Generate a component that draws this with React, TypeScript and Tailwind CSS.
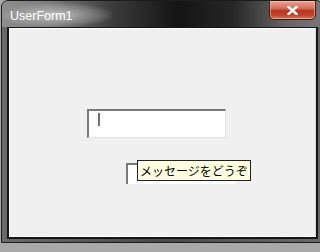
import React from "react";

export default function App() {
  return (
    <div className="w-[320px] h-[252px] bg-[#a9a9a9] overflow-hidden pl-[1px]">
      <div className="w-[322px] shrink-0 h-[243px] rounded-t-[7px] border border-[#1c1c1c] bg-[#6f6f6f] flex flex-col overflow-hidden">
        {/* Title bar */}
        <div className="relative h-[26px] shrink-0 flex items-center pl-[8px] bg-[linear-gradient(90deg,#8e8e8e_0%,#7c7c7c_15%,#3a3a3a_35%,#141414_55%,#262626_72%,#636363_88%,#777777_100%)]">
          <div className="absolute left-0 top-[2px] w-[110px] h-[24px] rounded-full bg-[radial-gradient(ellipse_at_center,rgba(235,235,235,0.6)_0%,rgba(200,200,200,0.25)_55%,rgba(0,0,0,0)_75%)]" />
          <span className="relative text-white text-[12.5px] leading-none mt-[4px]" style={{ fontFamily: '"Liberation Sans", Arial, sans-serif' }}>
            UserForm1
          </span>
          <div className="absolute left-[267px] top-[-1px] w-[47px] h-[20px] rounded-b-[5px] border border-[#4a1a10] bg-[linear-gradient(180deg,#e7a493_0%,#d3715c_40%,#b8341c_55%,#c2472e_80%,#d87a62_100%)] flex items-center justify-center shadow-[inset_0_0_0_1px_rgba(255,210,200,0.5)]">
            <svg width="11" height="9" viewBox="0 0 11 9">
              <path d="M1.5 1 L9.5 8 M9.5 1 L1.5 8" stroke="#ffffff" strokeWidth="2.4" strokeLinecap="square" />
            </svg>
          </div>
        </div>
        {/* Frame body */}
        <div className="flex-1 pl-[5px] pb-[3px] pr-[4px] flex bg-[linear-gradient(90deg,#6a6a6a,#4a4a4a_50%,#6a6a6a)]">
          <div className="flex-1 border-2 border-t border-[#161616] flex">
            <div className="flex-1 border border-white border-r-[#dcdcdc] bg-[#f0f0f0] relative">
              {/* TextBox1 */}
              <div className="absolute left-[77px] top-[80px] w-[139px] h-[29px] bg-white border-t-2 border-l-2 border-t-[#7a7a7a] border-l-[#7a7a7a] border-r border-b border-r-[#e3e3e3] border-b-[#e3e3e3]">
                <div className="absolute left-[9px] top-[2px] w-[2px] h-[13px] bg-[#6e6e6e]" />
              </div>
              {/* TextBox2 */}
              <div className="absolute left-[116px] top-[134px] w-[110px] h-[21px] bg-white border-t-2 border-l-2 border-t-[#7a7a7a] border-l-[#7a7a7a]" />
              {/* Tooltip */}
              <div
                className="absolute left-[127px] top-[131px] h-[21px] px-[2px] bg-[#ffffe1] border border-[#222222] flex items-center text-[12px] text-black leading-none"
                style={{ fontFamily: '"Noto Sans CJK JP", "Noto Sans", sans-serif' }}
              >
                メッセージをどうぞ
              </div>
            </div>
          </div>
        </div>
      </div>
    </div>
  );
}
